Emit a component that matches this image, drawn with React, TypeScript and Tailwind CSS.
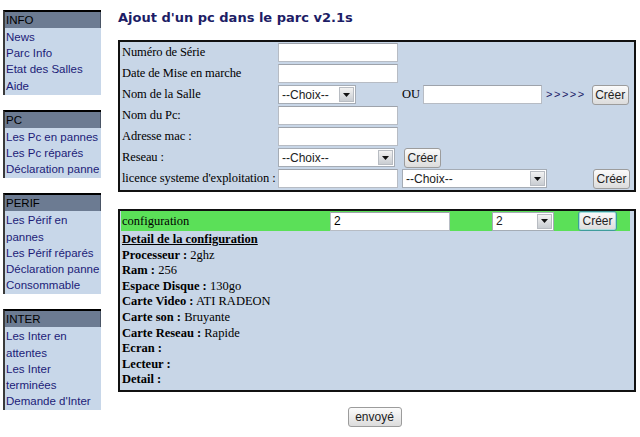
import React from 'react';

const menus = [
  { title: 'INFO', items: ['News', 'Parc Info', 'Etat des Salles', 'Aide'] },
  { title: 'PC', items: ['Les Pc en pannes', 'Les Pc réparés', 'Déclaration panne'] },
  { title: 'PERIF', items: ['Les Périf en pannes', 'Les Périf réparés', 'Déclaration panne', 'Consommable'] },
  { title: 'INTER', items: ['Les Inter en attentes', 'Les Inter terminées', "Demande d'Inter"] },
];

const sideFont = { fontFamily: '"Comic Sans MS", "Liberation Sans", Arial, sans-serif' };
const serif = { fontFamily: '"Liberation Serif", "Times New Roman", serif' };
const ctrl = { fontFamily: '"Liberation Sans", Arial, sans-serif' };

const TextBox = ({ w, value = '' }: { w: string; value?: string }) => (
  <div
    className={`${w} h-[19px] bg-white border border-[#b7bcc4] border-t-[#9ea3ab] text-[12px] leading-[17px] px-[3px] text-black`}
    style={ctrl}
  >
    {value}
  </div>
);

const Select = ({ w, label }: { w: string; label: string }) => (
  <div
    className={`${w} h-[19px] bg-white border border-[#a5acb5] flex items-center justify-between text-[12px] text-[#222]`}
    style={ctrl}
  >
    <span className="pl-[3px]">{label}</span>
    <span className="w-[15px] h-[15px] mr-[1px] bg-gradient-to-b from-[#f2f2f2] to-[#c9cdd2] border border-[#b8bcc2] flex items-center justify-center">
      <svg width="7" height="4" viewBox="0 0 7 4">
        <path d="M0 0h7L3.5 4z" fill="#111" />
      </svg>
    </span>
  </div>
);

const Btn = ({ label, focus = false, w = 'w-[37px]' }: { label: string; focus?: boolean; w?: string }) => (
  <div
    className={`${w} h-[20px] flex items-center justify-center rounded-[3px] bg-gradient-to-b from-[#fbfbfb] to-[#dcdcdc] text-[12px] text-[#222] border ${
      focus ? 'border-[#3f9c9c] shadow-[inset_0_0_0_1px_#a9dede]' : 'border-[#9c9c9c]'
    }`}
    style={ctrl}
  >
    {label}
  </div>
);

const Row = ({ label, children, extra }: { label: string; children: React.ReactNode; extra?: React.ReactNode }) => (
  <div className="h-[21px] flex items-center">
    <div className="w-[157px] shrink-0 pl-[1px] text-[12.5px] tracking-[-0.1px] text-black whitespace-nowrap" style={serif}>
      {label}
    </div>
    <div className="w-[124px] shrink-0 flex">{children}</div>
    <div className="flex-1 flex items-center">{extra}</div>
  </div>
);

const details = [
  ['Processeur', '2ghz'],
  ['Ram', '256'],
  ['Espace Disque', '130go'],
  ['Carte Video', 'ATI RADEON'],
  ['Carte son', 'Bruyante'],
  ['Carte Reseau', 'Rapide'],
  ['Ecran', ''],
  ['Lecteur', ''],
  ['Detail', ''],
];

export default function App() {
  return (
    <div className="w-[640px] h-[437px] bg-white flex overflow-hidden">
      <div className="w-[98px] shrink-0 ml-[3px] pt-[10px] flex flex-col gap-[15px]" style={sideFont}>
        {menus.map((m) => (
          <div key={m.title} className="border-t-2 border-l-2 border-t-black border-l-[#3a3a3a] bg-[#c8d7e9]">
            <div className="h-[16px] bg-[#6c7b92] border-r border-[#4a5566] text-[11.5px] leading-[17px] text-black pl-[1px]">
              {m.title}
            </div>
            <div className="py-[1px] text-[11.5px] leading-[16.2px] text-[#1c1c78] pl-[1px]">
              {m.items.map((it) => (
                <div key={it}>{it}</div>
              ))}
            </div>
          </div>
        ))}
      </div>

      <div className="ml-[17px] w-[518px] shrink-0 flex flex-col">
        <h1
          className="mt-[9px] h-[21px] text-[13px] font-bold text-[#1d1d66] leading-[18px]"
          style={{ fontFamily: '"DejaVu Sans", Verdana, sans-serif' }}
        >
          Ajout d'un pc dans le parc v2.1s
        </h1>

        <div className="mt-[10px] border-2 border-[#111] bg-[#c8d6e7] pb-[1px] pl-[1px]">
          <Row label="Numéro de Série">
            <TextBox w="w-[120px]" />
          </Row>
          <Row label="Date de Mise en marche">
            <TextBox w="w-[120px]" />
          </Row>
          <Row
            label="Nom de la Salle"
            extra={
              <>
                <span className="text-[12.5px] text-black" style={serif}>
                  OU
                </span>
                <div className="ml-[3px]">
                  <TextBox w="w-[119px]" />
                </div>
                <span className="ml-[4px] text-[11px] text-[#1a1a66] tracking-[1.5px]" style={ctrl}>
                  &gt;&gt;&gt;&gt;&gt;
                </span>
                <div className="ml-[6px]">
                  <Btn label="Créer" />
                </div>
              </>
            }
          >
            <Select w="w-[78px]" label="--Choix--" />
          </Row>
          <Row label="Nom du Pc:">
            <TextBox w="w-[120px]" />
          </Row>
          <Row label="Adresse mac :">
            <TextBox w="w-[120px]" />
          </Row>
          <Row
            label="Reseau :"
            extra={
              <div className="ml-[2px]">
                <Btn label="Créer" />
              </div>
            }
          >
            <Select w="w-[117px]" label="--Choix--" />
          </Row>
          <Row
            label="licence systeme d'exploitation :"
            extra={
              <>
                <Select w="w-[145px]" label="--Choix--" />
                <div className="ml-[46px]">
                  <Btn label="Créer" />
                </div>
              </>
            }
          >
            <TextBox w="w-[120px]" />
          </Row>
        </div>

        <div className="mt-[17px] border-2 border-[#111] bg-[#c8d6e7] pt-[0px] pl-[1px] pr-[4px] pb-[2px]">
          <div className="h-[20px] bg-[#5be058] flex items-center">
            <div className="w-[209px] pl-[1px] text-[12.5px] text-black" style={serif}>
              configuration
            </div>
            <TextBox w="w-[120px]" value="2" />
            <div className="ml-[42px]">
              <Select w="w-[62px]" label="2" />
            </div>
            <div className="ml-[24px]">
              <Btn label="Créer" focus w="w-[39px]" />
            </div>
          </div>
          <div className="pl-[1px] pt-[1px] text-[12.5px] leading-[15.6px] text-black" style={serif}>
            <div className="font-bold underline">Detail de la configuration</div>
            {details.map(([k, v]) => (
              <div key={k}>
                <span className="font-bold">{k} :</span>
                {v ? ` ${v}` : ''}
              </div>
            ))}
          </div>
        </div>

        <div className="mt-[15px] flex justify-center pr-[5px]">
          <div className="h-[19px] flex">
            <Btn label="envoyé" w="w-[54px]" />
          </div>
        </div>
      </div>
    </div>
  );
}
